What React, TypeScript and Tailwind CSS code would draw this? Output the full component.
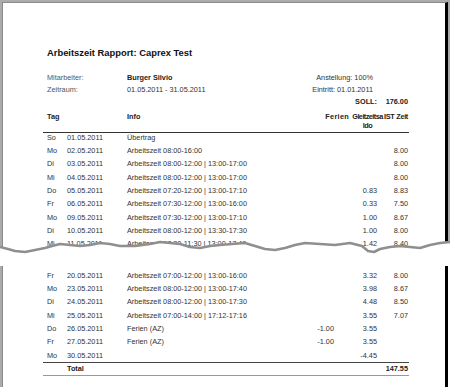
type Row = {
  tag: string;
  datum: string;
  info?: string;
  ferien?: string;
  gleit?: string;
  ist?: string;
};

const topRows: Row[] = [
  { tag: "So", datum: "01.05.2011", info: "Übertrag" },
  { tag: "Mo", datum: "02.05.2011", info: "Arbeitszeit 08:00-16:00", ist: "8.00" },
  { tag: "Di", datum: "03.05.2011", info: "Arbeitszeit 08:00-12:00 | 13:00-17:00", ist: "8.00" },
  { tag: "Mi", datum: "04.05.2011", info: "Arbeitszeit 08:00-12:00 | 13:00-17:00", ist: "8.00" },
  { tag: "Do", datum: "05.05.2011", info: "Arbeitszeit 07:20-12:00 | 13:00-17:10", gleit: "0.83", ist: "8.83" },
  { tag: "Fr", datum: "06.05.2011", info: "Arbeitszeit 07:30-12:00 | 13:00-16:00", gleit: "0.33", ist: "7.50" },
  { tag: "Mo", datum: "09.05.2011", info: "Arbeitszeit 07:30-12:00 | 13:00-17:10", gleit: "1.00", ist: "8.67" },
  { tag: "Di", datum: "10.05.2011", info: "Arbeitszeit 08:00-12:00 | 13:30-17:30", gleit: "1.00", ist: "8.00" },
  { tag: "Mi", datum: "11.05.2011", info: "Arbeitszeit 07:30-11:30 | 13:00-17:40", gleit: "1.42", ist: "8.40" },
  { tag: "Do", datum: "12.05.2011", info: "Arbeitszeit 07:30-12:00 | 13:00-17:00", gleit: "1.42", ist: "8.00" },
];

const bottomRows: Row[] = [
  { tag: "Fr", datum: "20.05.2011", info: "Arbeitszeit 07:00-12:00 | 13:00-16:00", gleit: "3.32", ist: "8.00" },
  { tag: "Mo", datum: "23.05.2011", info: "Arbeitszeit 08:00-12:00 | 13:00-17:40", gleit: "3.98", ist: "8.67" },
  { tag: "Di", datum: "24.05.2011", info: "Arbeitszeit 08:00-12:00 | 13:00-17:30", gleit: "4.48", ist: "8.50" },
  { tag: "Mi", datum: "25.05.2011", info: "Arbeitszeit 07:00-14:00 | 17:12-17:16", gleit: "3.55", ist: "7.07" },
  { tag: "Do", datum: "26.05.2011", info: "Ferien (AZ)", ferien: "-1.00", gleit: "3.55" },
  { tag: "Fr", datum: "27.05.2011", info: "Ferien (AZ)", ferien: "-1.00", gleit: "3.55" },
];

const lastRow: Row = { tag: "Mo", datum: "30.05.2011", gleit: "-4.45" };

// torn edge, absolute coords (y 236..266)
const tear =
  "0,247 8,249 15,251 25,252 35,250 45,248 52,246 60,244 70,245 80,246 90,245 100,243 110,244 120,246 135,246 150,244 160,242 170,243 180,244 190,247 200,248 210,246 220,245 232,244 245,243 255,246 265,249 275,250 285,248 295,245 305,243 320,244 335,245 350,243 362,246 368,251 374,252 380,249 390,247 400,246 410,247 420,248 430,245 440,243 450,242";

function DataRow({ r, h = "h-[13.33px]" }: { r: Row; h?: string }) {
  return (
    <div className={`flex whitespace-nowrap pt-[0.3px] leading-[9px] ${h}`}>
      <div className="w-[24px] pl-[4px]">{r.tag}</div>
      <div className="w-[60px]">{r.datum}</div>
      <div className="flex-1">{r.info}</div>
      <div className="w-[40px] text-right">{r.ferien}</div>
      <div className="w-[43px] text-right">{r.gleit}</div>
      <div className="w-[32px] pr-[1px] text-right">{r.ist}</div>
    </div>
  );
}

export default function App() {
  return (
    <div className="flex h-[387px] w-[450px] flex-col overflow-hidden bg-white font-['Liberation_Sans',Arial,sans-serif] text-[7.3px] text-[#333]">
      {/* upper part of the page */}
      <div className="relative h-[266px] shrink-0 overflow-hidden bg-[#ababab] px-[2px] pt-[2px]">
        <div className="h-full border-l border-t border-[#8a8a8a] border-r-[3px] border-r-black bg-white pt-[44px]">
          <h1 className="ml-[44px] text-[9.4px] font-bold leading-[12px] text-[#111]">
            Arbeitszeit Rapport: Caprex Test
          </h1>

          <div className="ml-[40px] mt-[13px] w-[366px] leading-[12px]">
            <div className="flex h-[12px]">
              <div className="w-[84px] pl-[4px] text-[#555]">Mitarbeiter:</div>
              <div className="flex-1 font-bold text-[#222]">Burger Silvio</div>
              <div className="pr-[36px]">Anstellung: 100%</div>
            </div>
            <div className="flex h-[12px]">
              <div className="w-[84px] pl-[4px] text-[#555]">Zeitraum:</div>
              <div className="flex-1">01.05.2011 - 31.05.2011</div>
              <div className="pr-[36px]">Eintritt: 01.01.2011</div>
            </div>
            <div className="flex h-[12px] justify-end font-bold text-[#222]">
              <div>SOLL:</div>
              <div className="w-[32px] pr-[1px] text-right">176.00</div>
            </div>
          </div>

          <div className="ml-[40px] w-[366px]">
            <div className="mt-[5px] flex border-b border-[#333] pb-[1.5px] font-bold leading-[8.5px] text-[#222]">
              <div className="w-[84px] pl-[4px]">Tag</div>
              <div className="flex-1">Info</div>
              <div className="w-[44px] text-right tracking-[0.3px]">Ferien</div>
              <div className="w-[36px] pl-[1px] text-center tracking-[-0.55px]">
                Gleitzeitsa
                <br />
                ldo
              </div>
              <div className="flex w-[24px] justify-end whitespace-nowrap pr-[1px] tracking-[-0.3px]">IST Zeit</div>
            </div>
            {topRows.map((r) => (
              <DataRow key={r.datum} r={r} />
            ))}
          </div>
        </div>

        <svg className="absolute left-0 top-[236px] h-[30px] w-[450px]" viewBox="0 236 450 30">
          <polygon points={`${tear} 450,266 0,266`} fill="#fff" />
          <polyline points={tear} fill="none" stroke="#8f8f8f" strokeWidth="2.6" strokeLinejoin="round" />
        </svg>
      </div>

      {/* lower part of the page */}
      <div className="flex-1 border-l-2 border-[#ababab] bg-white pr-[2px]">
        <div className="h-full border-l border-[#8a8a8a] border-r-[3px] border-r-black pt-[4.5px]">
          <div className="ml-[40px] w-[366px]">
            {bottomRows.map((r) => (
              <DataRow key={r.datum} r={r} />
            ))}
            <DataRow r={lastRow} h="h-[11.8px]" />
            <div className="flex h-[14.2px] border-b border-t border-b-[#999] border-t-[#444] pt-[0.3px] font-bold leading-[9px] text-[#222]">
              <div className="w-[24px]" />
              <div className="flex-1">Total</div>
              <div className="w-[32px] pr-[1px] text-right">147.55</div>
            </div>
          </div>
        </div>
      </div>
    </div>
  );
}
